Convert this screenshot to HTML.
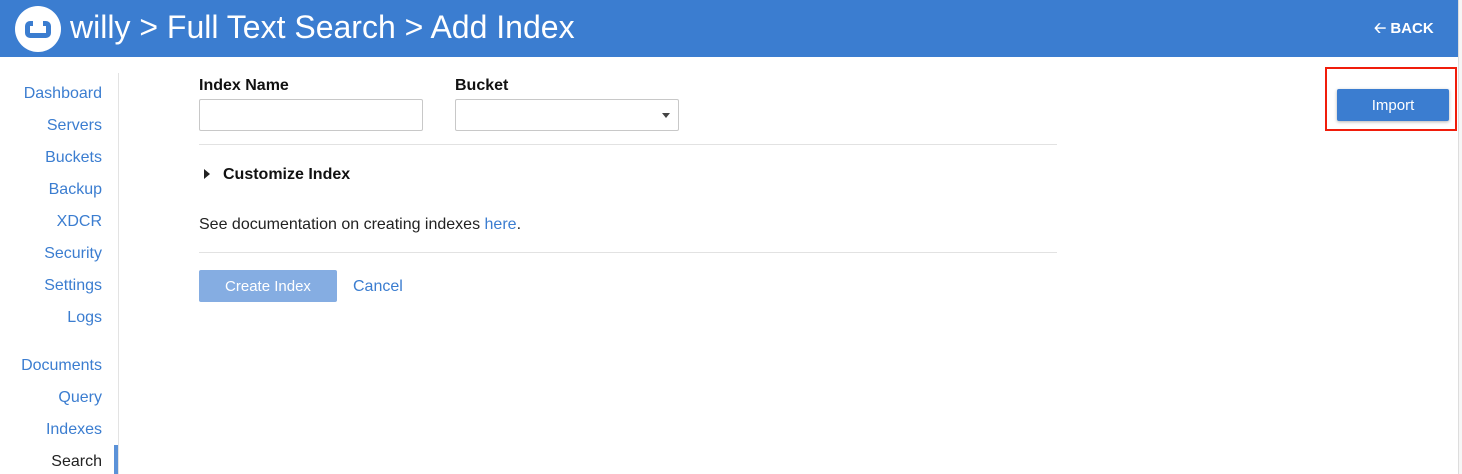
<!DOCTYPE html>
<html><head><meta charset="utf-8"><style>
*{margin:0;padding:0;box-sizing:border-box}
body{width:1462px;height:474px;overflow:hidden;background:#fff;font-family:"Liberation Sans",sans-serif;position:relative}
.hdr{position:absolute;left:0;top:0;width:1458px;height:57px;background:#3b7dd0;color:#fff}
.logo{position:absolute;left:15px;top:6px;width:46px;height:46px;border-radius:50%;background:#fff}
.logo i{position:absolute;left:10px;top:15px;width:26px;height:17px;border:5px solid #3b7dd0;border-radius:5px}
.logo b{position:absolute;left:18px;top:13px;width:10px;height:8px;background:#fff}
.title{position:absolute;left:70px;top:9px;font-size:32px;white-space:nowrap;letter-spacing:0}
.back{position:absolute;left:1374px;top:18px;font-size:15px;font-weight:bold}
.strip{position:absolute;left:1458px;top:0;width:4px;height:474px;background:#f6f6f6;border-left:1px solid #ddd}
.nav a{position:absolute;right:1360px;font-size:16px;color:#3b7dd0;text-decoration:none;white-space:nowrap}
.vline{position:absolute;left:118px;top:73px;width:1px;height:401px;background:#e3e3e3}
.act{position:absolute;left:114px;top:445px;width:4px;height:29px;background:#5b92d8}
.lbl{position:absolute;font-size:16px;font-weight:bold;color:#111}
.inp{position:absolute;top:99px;width:224px;height:32px;border:1px solid #c8c8c8;border-radius:2px}
.hr{position:absolute;left:199px;width:858px;height:1px;background:#e2e2e2}
.btn{position:absolute;left:199px;top:270px;width:138px;height:32px;background:#85ade2;color:#fff;font-size:15px;text-align:center;line-height:33px;border-radius:2px}
.imp{position:absolute;left:1337px;top:89px;width:112px;height:32px;background:#3b7dd0;color:#fff;font-size:15px;text-align:center;line-height:33px;border-radius:2px;box-shadow:0 1px 3px rgba(0,0,0,.3)}
.red{position:absolute;left:1325px;top:67px;width:132px;height:64px;border:2px solid #f01d0b}
</style></head><body>
<div class="hdr">
 <div class="logo"><i></i><b></b></div>
 <div class="title">willy &gt; Full Text Search &gt; Add Index</div>
 <div class="back">&#129120; BACK</div>
</div>
<div class="strip"></div>
<div class="nav">
<a style="top:85px">Dashboard</a>
<a style="top:117px">Servers</a>
<a style="top:149px">Buckets</a>
<a style="top:181px">Backup</a>
<a style="top:213px">XDCR</a>
<a style="top:245px">Security</a>
<a style="top:277px">Settings</a>
<a style="top:309px">Logs</a>
<a style="top:357px">Documents</a>
<a style="top:389px">Query</a>
<a style="top:421px">Indexes</a>
<a style="top:453px;color:#222">Search</a>
</div>
<div class="vline"></div><div class="act"></div>
<div class="lbl" style="left:199px;top:77px">Index Name</div>
<div class="lbl" style="left:455px;top:77px">Bucket</div>
<div class="inp" style="left:199px"></div>
<div class="inp" style="left:455px"><span style="position:absolute;right:8px;top:13px;border-left:4px solid transparent;border-right:4px solid transparent;border-top:5px solid #444"></span></div>
<div class="hr" style="top:144px"></div>
<span style="position:absolute;left:204px;top:169px;border-top:5px solid transparent;border-bottom:5px solid transparent;border-left:6px solid #222"></span>
<div class="lbl" style="left:223px;top:166px">Customize Index</div>
<div style="position:absolute;left:199px;top:216px;font-size:16px;color:#222">See documentation on creating indexes <span style="color:#3b7dd0">here</span>.</div>
<div class="hr" style="top:252px"></div>
<div class="btn">Create Index</div>
<div style="position:absolute;left:353px;top:278px;font-size:16px;color:#3b7dd0">Cancel</div>
<div class="imp">Import</div>
<div class="red"></div>
</body></html>
